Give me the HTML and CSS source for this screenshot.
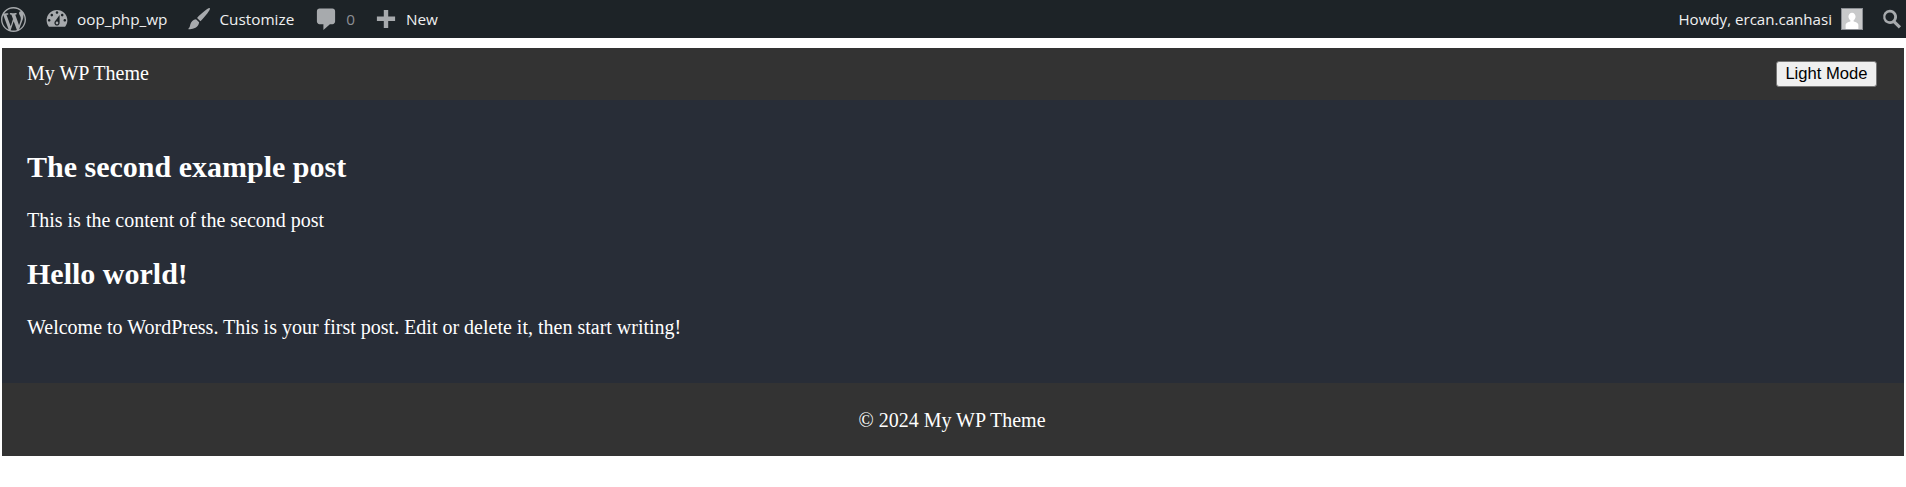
FILE: index.html
```html
<!DOCTYPE html>
<html lang="en">
<head>
<meta charset="utf-8">
<title>My WP Theme</title>
<link rel="stylesheet" href="styles.css">
</head>
<body>
<div class="adminbar">
  <div class="ab-group">
    <span class="ab-item ab-wp"><svg class="ic ic-wp" viewBox="0 0 20 20"><path d="M20 10c0-5.51-4.49-10-10-10C4.48 0 0 4.49 0 10c0 5.52 4.48 10 10 10 5.51 0 10-4.48 10-10zM7.78 15.37L4.37 6.22c.55-.02 1.17-.08 1.17-.08.5-.06.44-1.13-.06-1.11 0 0-1.45.11-2.37.11-.18 0-.37 0-.58-.01C4.12 2.69 6.87 1.11 10 1.11c2.33 0 4.45.87 6.05 2.34-.68-.11-1.65.39-1.65 1.58 0 .74.45 1.36.9 2.1.35.61.55 1.36.55 2.46 0 1.49-1.4 5-1.4 5l-3.03-8.37c.54-.02.82-.17.82-.17.5-.05.44-1.25-.06-1.22 0 0-1.44.12-2.38.12-.87 0-2.33-.12-2.33-.12-.5-.03-.56 1.2-.06 1.22l.92.08 1.26 3.41zM17.41 10c.24-.64.74-1.87.43-4.25.7 1.29 1.05 2.71 1.05 4.25 0 3.29-1.73 6.24-4.4 7.78.97-2.59 1.94-5.2 2.92-7.78zM6.1 18.09C3.12 16.65 1.11 13.53 1.11 10c0-1.3.23-2.48.72-3.59C3.25 10.3 4.67 14.2 6.1 18.09zm4.03-6.63l2.58 6.98c-.86.29-1.76.45-2.71.45-.79 0-1.57-.11-2.29-.33.81-2.38 1.62-4.74 2.42-7.1z"/></svg></span>
    <span class="ab-item ab-site"><svg class="ic" viewBox="0 0 20 20"><path fill-rule="evenodd" d="M3.76 16h12.48c1.1-1.37 1.76-3.11 1.76-5 0-4.42-3.58-8-8-8s-8 3.58-8 8c0 1.89.66 3.63 1.76 5zM10 4c.55 0 1 .45 1 1s-.45 1-1 1-1-.45-1-1 .45-1 1-1zM6 6c.55 0 1 .45 1 1s-.45 1-1 1-1-.45-1-1 .45-1 1-1zm8 0c.55 0 1 .45 1 1s-.45 1-1 1-1-.45-1-1 .45-1 1-1zm-5.37 5.55L12 7v6c0 1.1-.9 2-2 2s-2-.9-2-2c0-.57.24-1.08.63-1.45zM4 10c.55 0 1 .45 1 1s-.45 1-1 1-1-.45-1-1 .45-1 1-1zm12 0c.55 0 1 .45 1 1s-.45 1-1 1-1-.45-1-1 .45-1 1-1zm-5 3c0-.55-.45-1-1-1s-1 .45-1 1 .45 1 1 1 1-.45 1-1z"/></svg>oop_php_wp</span>
    <span class="ab-item"><svg class="ic" viewBox="0 0 20 20"><path d="M18.3 1.7c.5.5-.6 2.4-2.6 4.9-1.4 1.8-3.1 3.7-4.6 5.1L8.5 9.2c1.4-1.5 3.3-3.3 5.1-4.7 2.300-1.900 4.200-3.300 4.700-2.800zM7.700 10.100l2.400 2.400c-.2 1.700-1.200 3.400-2.800 4.300-1.900 1-3.900 1.200-5.800.9 1.200-.8 1.500-2 1.800-3.500.4-2.100 2.200-3.800 4.400-4.100z"/></svg>Customize</span>
    <span class="ab-item ab-muted"><svg class="ic" viewBox="0 0 20 20"><path d="M5 2h10c1.100 0 2 .9 2 2v8c0 1.100-.9 2-2 2h-2l-5 4.500V14H5c-1.100 0-2-.9-2-2V4c0-1.100.9-2 2-2z"/></svg>0</span>
    <span class="ab-item ab-new"><svg class="ic" viewBox="0 0 20 20"><path d="M17 8v3.500h-5.300V17H8.300v-5.500H3V8h5.300V3h3.400v5z"/></svg>New</span>
  </div>
  <div class="ab-group ab-right">
    <span class="ab-howdy">Howdy, ercan.canhasi<svg class="avatar" viewBox="0 0 22 22"><rect width="22" height="22" fill="#c8c9ca"/><path fill="#fff" d="M11 4c2.300 0 3.900 1.900 3.900 4.300 0 1.900-1 3.500-2.100 4.200v1.200c2.800.7 5.200 1.900 5.200 3.700V22H4v-4.600c0-1.800 2.400-3 5.200-3.700v-1.200C8.100 11.800 7.100 10.200 7.100 8.300 7.100 5.900 8.700 4 11 4z"/></svg></span>
    <span class="ab-search"><svg class="ic ic-search" viewBox="0 0 20 20"><path fill-rule="evenodd" d="M8 1.500a6.500 6.500 0 0 1 5.300 10.300l4.900 4.900-2 2-4.900-4.900A6.500 6.500 0 1 1 8 1.500zm0 2.500a4 4 0 1 0 0 8 4 4 0 0 0 0-8z"/></svg></span>
  </div>
</div>
<div class="page">
  <header class="site-header">
    <span class="site-title">My WP Theme</span>
    <button class="mode-btn" type="button">Light Mode</button>
  </header>
  <main class="site-main">
    <article>
      <h2>The second example post</h2>
      <p>This is the content of the second post</p>
    </article>
    <article>
      <h2>Hello world!</h2>
      <p>Welcome to WordPress. This is your first post. Edit or delete it, then start writing!</p>
    </article>
  </main>
  <footer class="site-footer">© 2024 My WP Theme</footer>
</div>
</body>
</html>
```
FILE: styles.css
```css
html, body { margin: 0; padding: 0; background: #fff; }
body { font-family: "Liberation Serif", "Times New Roman", serif; font-size: 20px; color: #fff; }

.adminbar {
  height: 38px;
  background: #1d2327;
  display: flex;
  justify-content: space-between;
  align-items: center;
  font-family: "Open Sans", "Noto Sans", sans-serif;
  font-size: 15.3px;
  color: #f0f0f1;
  margin-bottom: 10px;
}
.ab-group { display: flex; align-items: center; }
.ab-right { margin-right: 3px; }
.ab-item { display: flex; align-items: center; margin-left: 19px; }
.ab-wp { margin-left: 1px; }
.ab-site { margin-left: 18px; }
.ab-new { margin-left: 18px; }
.ab-muted { color: #8c8f94; }
.ic { width: 26px; height: 26px; fill: #a7aaad; margin-right: 7px; flex: none; }
.ic-wp { width: 25px; height: 25px; margin: 0; }
.ab-howdy { display: flex; align-items: center; font-size: 15.1px; }
.avatar { width: 22px; height: 22px; margin-left: 9px; border: 1px solid #8c8f94; box-sizing: border-box; }
.ab-search { display: flex; margin-left: 18px; }
.ic-search { margin: 0; width: 22px; height: 22px; }

.page { margin: 0 2px; }
.site-header {
  height: 52px;
  background: #333;
  display: flex;
  justify-content: space-between;
  align-items: center;
  padding: 0 27px 0 25px;
}
.site-title { margin-bottom: 2px; }
.mode-btn {
  font-family: "Liberation Sans", Arial, sans-serif;
  font-size: 16.6px;
  height: 26px;
  padding: 0 8.5px;
  background: #efefef;
  color: #000;
  border: 1px solid #767676;
  border-radius: 3px;
}
.site-main {
  height: 283px;
  box-sizing: border-box;
  background: #282d37;
  padding: 42px 25px 0;
}
.site-main h2 { font-size: 30px; line-height: 33px; margin: 0 0 26px; padding-top: 8px; }
.site-main p { margin: 0 0 18px; line-height: 22px; }
.site-footer {
  height: 73px;
  box-sizing: border-box;
  padding: 1px 2px 0 0;
  background: #333;
  display: flex;
  align-items: center;
  justify-content: center;
}
```
